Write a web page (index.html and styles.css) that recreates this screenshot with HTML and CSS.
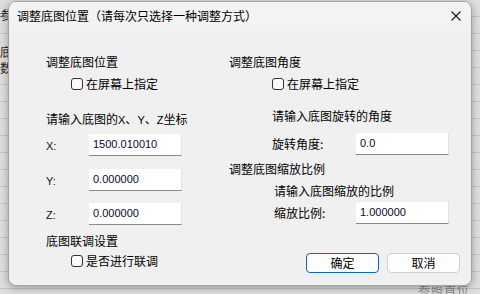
FILE: index.html
```html
<!DOCTYPE html>
<html lang="zh-CN">
<head>
    <meta charset="UTF-8">
    <title>调整底图位置</title>
    <link rel="stylesheet" href="styles.css">
</head>
<body>
    <div class="backdrop">
        <span class="bg-text bg-1">参照</span>
        <span class="bg-text bg-2">底</span>
        <span class="bg-text bg-3">数</span>
        <span class="bg-text bg-4">参照首位</span>
    </div>

    <div class="dialog">
        <div class="titlebar">
            <span class="title">调整底图位置（请每次只选择一种调整方式）</span>
            <svg class="close" width="10" height="10" viewBox="0 0 10 10">
                <path d="M0.5 0.5 L9.5 9.5 M9.5 0.5 L0.5 9.5" stroke="#1a1a1a" stroke-width="1.1" fill="none"/>
            </svg>
        </div>

        <div class="content">
            <div class="col col-left">
                <div class="heading">调整底图位置</div>
                <label class="check indent-cb"><span class="box"></span>在屏幕上指定</label>

                <div class="hint hint-xyz">请输入底图的<span class="latin">X</span>、<span class="latin">Y</span>、<span class="latin">Z</span>坐标</div>
                <div class="field row-x">
                    <span class="latin-label">X:</span>
                    <div class="edit">1500.010010</div>
                </div>
                <div class="field row-y">
                    <span class="latin-label">Y:</span>
                    <div class="edit">0.000000</div>
                </div>
                <div class="field row-z">
                    <span class="latin-label">Z:</span>
                    <div class="edit">0.000000</div>
                </div>

                <div class="heading link-head">底图联调设置</div>
                <label class="check indent-cb link-cb"><span class="box"></span>是否进行联调</label>
            </div>

            <div class="col col-right">
                <div class="heading">调整底图角度</div>
                <label class="check right-cb"><span class="box"></span>在屏幕上指定</label>

                <div class="hint hint-angle">请输入底图旋转的角度</div>
                <div class="field field-r row-angle">
                    <span class="cn-label">旋转角度:</span>
                    <div class="edit">0.0</div>
                </div>

                <div class="heading scale-head">调整底图缩放比例</div>
                <div class="hint hint-scale">请输入底图缩放的比例</div>
                <div class="field field-r row-scale">
                    <span class="cn-label">缩放比例:</span>
                    <div class="edit">1.000000</div>
                </div>

                <div class="buttons">
                    <button class="btn btn-default">确定</button>
                    <button class="btn">取消</button>
                </div>
            </div>
        </div>
    </div>
</body>
</html>
```

FILE: styles.css
```css
body {
    margin: 0;
    padding: 0;
    width: 480px;
    height: 294px;
    overflow: hidden;
    position: relative;
    font-family: "Noto Sans CJK SC", "Microsoft YaHei", sans-serif;
    font-size: 12px;
    color: #000;
    background-color: #dedede;
    background-image: repeating-linear-gradient(to bottom, transparent 0, transparent 16px, #c6c6c6 16px, #c6c6c6 17px);
}

/* app window behind the dialog */
.backdrop {
    position: absolute;
    top: 0;
    left: 0;
    width: 480px;
    height: 294px;
}

.bg-text {
    position: absolute;
    line-height: 14px;
    color: #222;
}

.bg-1 { left: 0; top: 8px; }
.bg-2 { left: 0; top: 45px; }
.bg-3 { left: 0; top: 61px; }
.bg-4 { left: 418px; top: 283px; color: #8a8a8a; letter-spacing: 1px; }

.dialog {
    position: relative;
    margin: 1px 0 0 8px;
    width: 464px;
    height: 285px;
    box-sizing: border-box;
    background: #f0f0f0;
    border: 1px solid #a3a3a3;
    border-radius: 8px;
    box-shadow: 0 2px 8px rgba(0, 0, 0, 0.3);
    overflow: hidden;
}

.titlebar {
    height: 29px;
    display: flex;
    align-items: center;
    justify-content: space-between;
    padding: 0 10px 0 8px;
    background: #f3f3f3;
}

.title {
    line-height: 16px;
    margin-top: -1px;
}

.close {
    margin-top: -2px;
}

.content {
    display: flex;
    padding-top: 23px;
}

.col {
    display: flex;
    flex-direction: column;
    align-items: flex-start;
}

.col-left {
    width: 183px;
    padding-left: 37px;
}

.col-right {
    flex: 1;
    padding-right: 11px;
}

.heading,
.hint {
    line-height: 16px;
    white-space: nowrap;
}

.check {
    display: flex;
    align-items: center;
    line-height: 16px;
    margin-top: 6px;
}

.box {
    width: 10px;
    height: 10px;
    border: 1px solid #333;
    border-radius: 3px;
    background: #fbfbfb;
    margin-right: 3px;
}

.indent-cb { margin-left: 25px; }
.right-cb { margin-left: 43px; }

.latin {
    font-family: "Liberation Sans", Arial, sans-serif;
    font-size: 11px;
}

.hint-xyz { margin-top: 19px; }

.field {
    display: flex;
    align-items: center;
    height: 22px;
}

.latin-label {
    width: 43px;
    margin-top: 2px;
    font-family: "Liberation Sans", Arial, sans-serif;
    font-size: 11px;
    color: #1a1020;
}

.row-x { margin-top: 6px; }
.row-y { margin-top: 13px; }
.row-z { margin-top: 12px; }

.edit {
    width: 93px;
    height: 22px;
    box-sizing: border-box;
    padding-left: 4px;
    background: #fff;
    border-right: 1px solid #e2e2e2;
    border-bottom: 1px solid #8a8a8a;
    font-family: "Liberation Sans", Arial, sans-serif;
    font-size: 11px;
    line-height: 21px;
    color: #0a0a30;
}

.link-head { margin-top: 8px; }
.link-cb { margin-top: 4px; }

.hint-angle {
    margin-top: 16px;
    margin-left: 43px;
}

.cn-label {
    width: 84px;
    line-height: 16px;
}

.field-r { padding-left: 43px; }

.row-angle { margin-top: 9px; }

.scale-head { margin-top: 6px; }

.hint-scale {
    margin-top: 6px;
    margin-left: 45px;
}

.row-scale {
    margin-top: 3px;
    padding-left: 45px;
}

.row-scale .cn-label { width: 82px; }

.buttons {
    align-self: stretch;
    display: flex;
    justify-content: flex-end;
    gap: 8px;
    margin-top: 29px;
}

.btn {
    width: 73px;
    height: 20px;
    padding: 0;
    font-family: "Noto Sans CJK SC", "Microsoft YaHei", sans-serif;
    font-size: 12px;
    line-height: 16px;
    color: #000;
    background: #fdfdfd;
    border: 1px solid #d0d0d0;
    border-radius: 4px;
}

.btn-default {
    border-color: #0f66c2;
}
```
